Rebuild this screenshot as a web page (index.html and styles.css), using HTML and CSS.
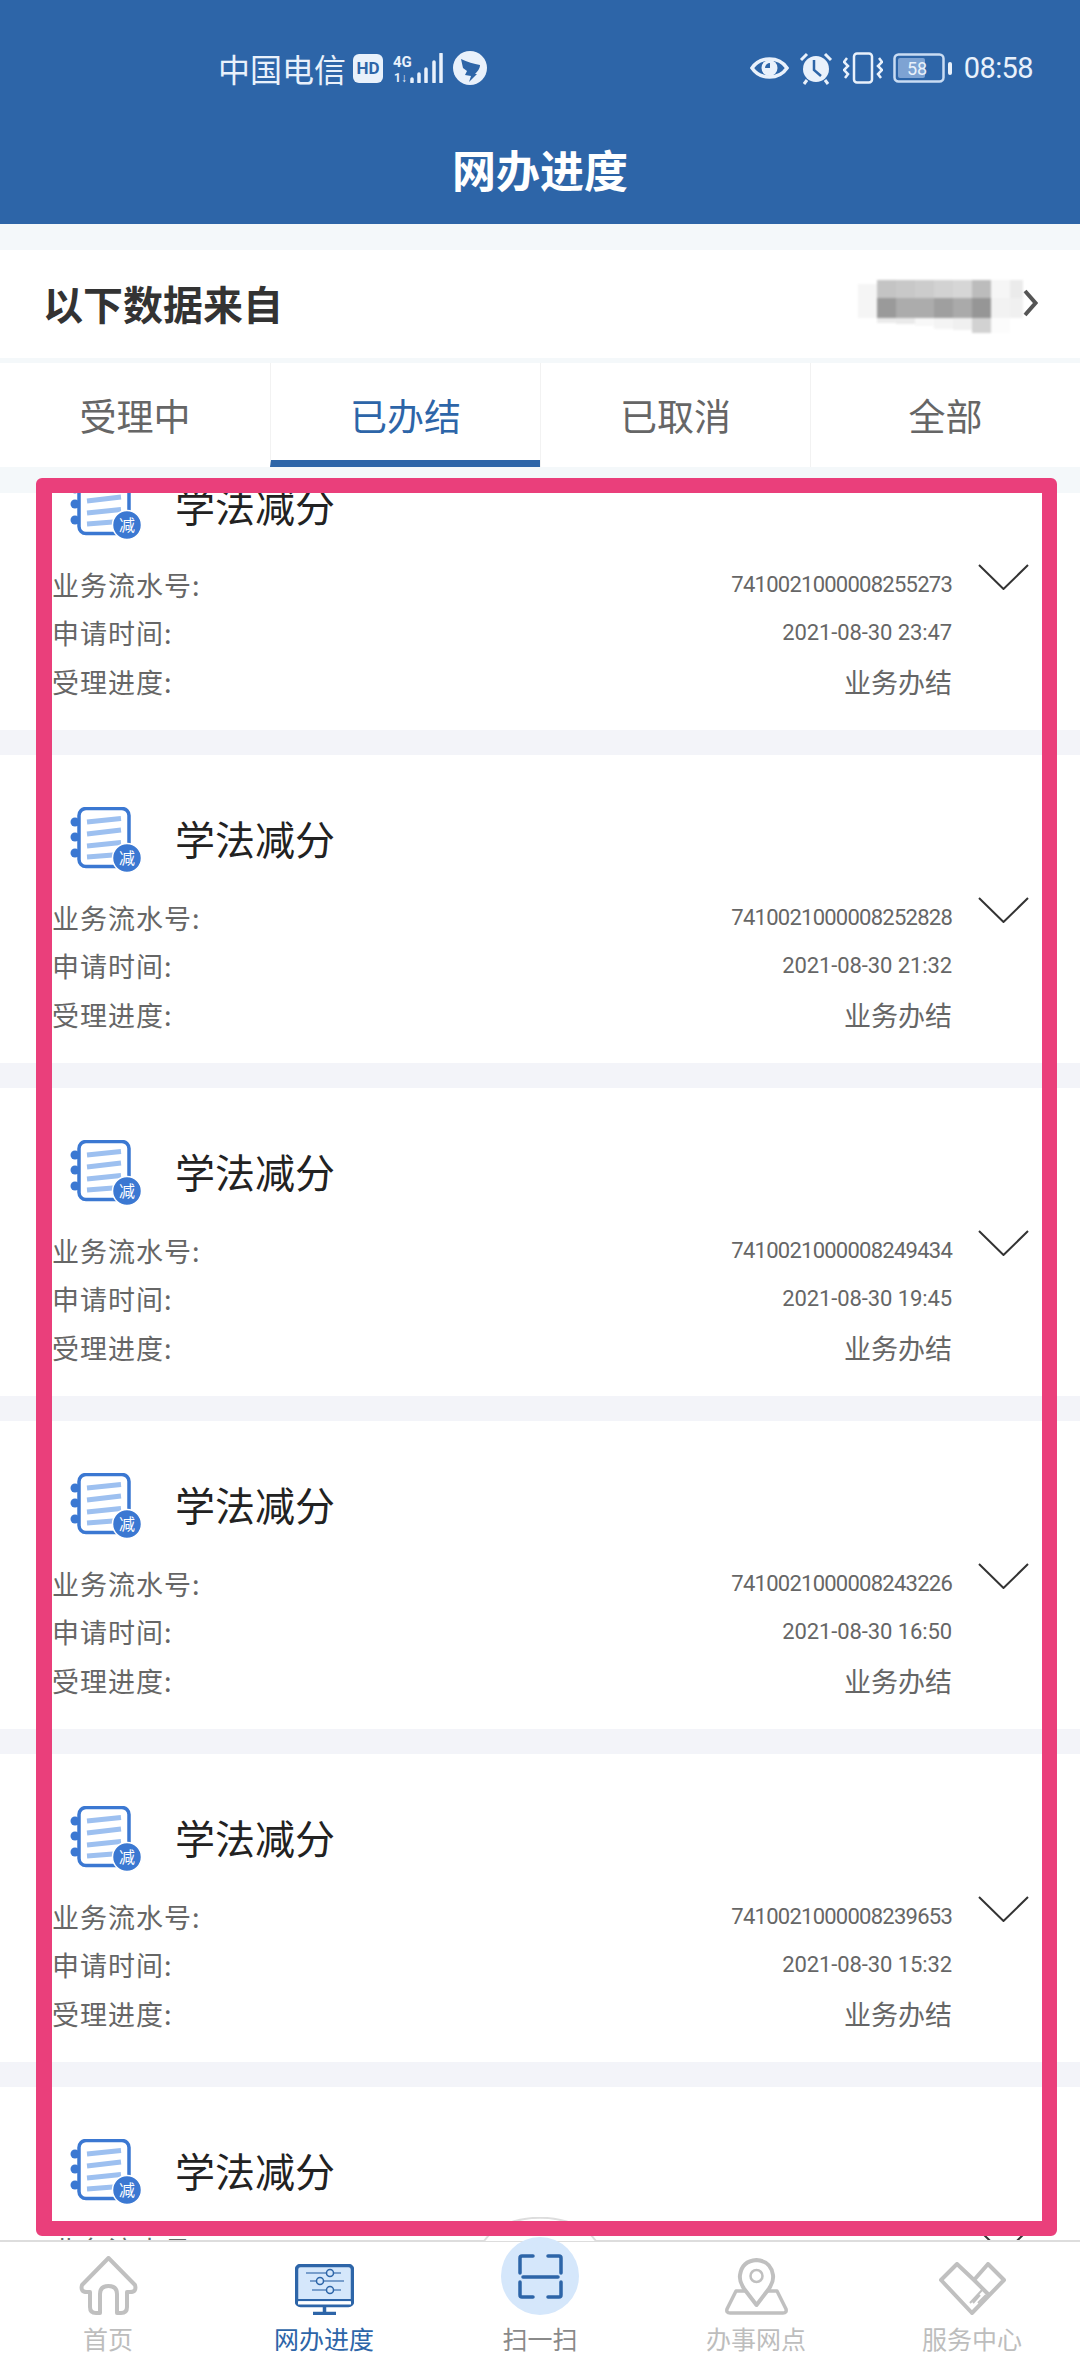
FILE: index.html
```html
<!DOCTYPE html>
<html lang="zh-CN">

<head>
  <meta charset="UTF-8">
  <meta name="viewport" content="width=device-width, initial-scale=1.0">
  <title>网办进度</title>
  <link rel="stylesheet" href="styles.css">
</head>

<body>
  <svg class="defs" width="0" height="0">
    <symbol id="book" viewBox="0 0 73 66">
      <circle cx="6" cy="15" r="4.5" fill="#3b78d2"></circle>
      <circle cx="6" cy="30" r="4.5" fill="#3b78d2"></circle>
      <circle cx="6" cy="46" r="4.5" fill="#3b78d2"></circle>
      <rect x="10" y="1.5" width="50" height="58" rx="7" fill="#fff" stroke="#3b78d2" stroke-width="3.5"></rect>
      <path d="M18 15 L52 11.5 M18 27 L52 23 M18 39 L52 35.5 M18 50 L44 48" stroke="#9dc0f0" stroke-width="5" fill="none"></path>
      <circle cx="58" cy="51" r="14.5" fill="#3b78d2" stroke="#fff" stroke-width="1.5"></circle>
      <text x="58" y="57" text-anchor="middle" font-size="16" fill="#fff" font-family="Noto Sans CJK SC, sans-serif">减</text>
    </symbol>
    <symbol id="chev" viewBox="0 0 51 26">
      <path d="M1 1 L25.500 25 L50 1" fill="none" stroke="#333" stroke-width="2"></path>
    </symbol>
  </svg>

  <div class="page">
    <header class="top">
      <div class="status">
        <div class="status-group">
          <span class="carrier">中国电信</span>
          <span class="hd">HD</span>
          <svg class="signal" width="50" height="30" viewBox="0 0 50 30">
            <text x="0" y="14" font-size="15" font-weight="700" fill="#e9f1fb" font-family="Roboto, sans-serif">4G</text>
            <text x="1" y="29" font-size="12" font-weight="700" fill="#e9f1fb" font-family="Roboto, sans-serif">1↓</text>
            <path d="M19 26 V29 M26 21 V29 M33 16 V29 M41 9 V29 M48 1 V29" stroke="#e9f1fb" stroke-width="3.500" stroke-linecap="round"></path>
          </svg>
          <svg width="34" height="34" viewBox="0 0 34 34">
            <circle cx="17" cy="17" r="17" fill="#e9f1fb"></circle>
            <path d="M8 8 C14 11 21 13 27 14 C27 18 24 21 22 23 L24 23 L16 31 L18 25 L12 24 L14 20 L10 17 Z" fill="#2d65a8"></path>
          </svg>
        </div>
        <div class="status-group status-right">
          <svg width="39" height="28" viewBox="0 0 39 28">
            <path d="M2 14 C10 2 29 2 37 14 C29 26 10 26 2 14 Z" fill="none" stroke="#e9f1fb" stroke-width="3.500"></path>
            <circle cx="19.500" cy="14" r="8" fill="#e9f1fb"></circle>
            <path d="M15 14 A5 5 0 0 1 20 9 L20 14 Z" fill="#2d65a8"></path>
          </svg>
          <svg width="34" height="34" viewBox="0 0 34 34">
            <circle cx="17" cy="18" r="13" fill="#e9f1fb"></circle>
            <path d="M2 9 L8 3 M32 9 L26 3 M8 29 L5 33 M26 29 L29 33" stroke="#e9f1fb" stroke-width="3"></path>
            <path d="M15 9 V19 L22 25" fill="none" stroke="#2d65a8" stroke-width="2.500"></path>
          </svg>
          <svg width="40" height="32" viewBox="0 0 40 32">
            <rect x="11" y="1.500" width="18" height="29" rx="3" fill="none" stroke="#e9f1fb" stroke-width="2.500"></rect>
            <path d="M4 6 L1 10 L5 14 L1 18 L5 22 L2 26 M36 6 L39 10 L35 14 L39 18 L35 22 L38 26" fill="none" stroke="#e9f1fb" stroke-width="2.500"></path>
          </svg>
          <svg width="60" height="30" viewBox="0 0 60 30">
            <rect x="1.500" y="1.500" width="49" height="27" rx="4" fill="none" stroke="#c9dcf3" stroke-width="2.500"></rect>
            <rect x="5" y="5" width="27" height="20" rx="2" fill="#7ea3d3"></rect>
            <text x="24" y="22" text-anchor="middle" font-size="18" fill="#e9f1fb" font-family="Roboto, sans-serif">58</text>
            <rect x="55" y="9" width="4" height="13" rx="2" fill="#e9f1fb"></rect>
          </svg>
          <span class="time">08:58</span>
        </div>
      </div>
      <h1 class="title">网办进度</h1>
    </header>

    <div class="source">
      <span class="source-label">以下数据来自</span>
      <div class="source-right">
        <svg class="mosaic" width="165" height="53" viewBox="0 0 165 53">
          <rect x="0" y="4" width="19" height="34" fill="#f5f5f5"></rect>
          <rect x="19" y="0" width="19" height="18" fill="#c4c4c4"></rect>
          <rect x="38" y="0" width="19" height="18" fill="#c8c8c8"></rect>
          <rect x="57" y="0" width="19" height="18" fill="#cccccc"></rect>
          <rect x="76" y="0" width="19" height="18" fill="#d2d2d2"></rect>
          <rect x="95" y="0" width="19" height="18" fill="#d6d6d6"></rect>
          <rect x="114" y="0" width="19" height="18" fill="#bcbcbc"></rect>
          <rect x="133" y="0" width="19" height="18" fill="#f6f6f6"></rect>
          <rect x="152" y="0" width="13" height="18" fill="#ebebeb"></rect>
          <rect x="19" y="18" width="19" height="20" fill="#9a9a9a"></rect>
          <rect x="38" y="18" width="19" height="20" fill="#acacac"></rect>
          <rect x="57" y="18" width="19" height="20" fill="#acacac"></rect>
          <rect x="76" y="18" width="19" height="20" fill="#9f9f9f"></rect>
          <rect x="95" y="18" width="19" height="20" fill="#aaaaaa"></rect>
          <rect x="114" y="18" width="19" height="20" fill="#969696"></rect>
          <rect x="133" y="18" width="19" height="20" fill="#f2f2f2"></rect>
          <rect x="152" y="18" width="13" height="20" fill="#f0f0f0"></rect>
          <rect x="19" y="38" width="19" height="5" fill="#ebebeb"></rect>
          <rect x="38" y="38" width="19" height="6" fill="#eaeaea"></rect>
          <rect x="57" y="38" width="19" height="8" fill="#f8f8f8"></rect>
          <rect x="76" y="38" width="19" height="11" fill="#f4f4f4"></rect>
          <rect x="95" y="38" width="19" height="12" fill="#f0f0f0"></rect>
          <rect x="114" y="38" width="19" height="15" fill="#d2d2d2"></rect>
          <rect x="133" y="38" width="19" height="15" fill="#fcfcfc"></rect>
        </svg>
        <svg class="source-arrow" width="15" height="28" viewBox="0 0 15 28">
          <path d="M2 2 L12.500 14 L2 26" fill="none" stroke="#555" stroke-width="4"></path>
        </svg>
      </div>
    </div>

    <div class="tabs">
      <div class="tab">受理中</div>
      <div class="tab tab-active">已办结</div>
      <div class="tab">已取消</div>
      <div class="tab">全部</div>
    </div>

    <div class="list">
      <div class="card card-first">
        <div class="card-head">
          <svg class="book" width="73" height="66"><use href="#book"></use></svg>
          <span class="card-title">学法减分</span>
        </div>
        <div class="card-body">
          <div class="rows">
            <div class="row"><span class="label">业务流水号:</span><span class="num">7410021000008255273</span></div>
            <div class="row"><span class="label">申请时间:</span><span class="num date">2021-08-30 23:47</span></div>
            <div class="row"><span class="label">受理进度:</span><span>业务办结</span></div>
          </div>
          <svg class="chev" width="51" height="26"><use href="#chev"></use></svg>
        </div>
      </div>

      <div class="card">
        <div class="card-head">
          <svg class="book" width="73" height="66"><use href="#book"></use></svg>
          <span class="card-title">学法减分</span>
        </div>
        <div class="card-body">
          <div class="rows">
            <div class="row"><span class="label">业务流水号:</span><span class="num">7410021000008252828</span></div>
            <div class="row"><span class="label">申请时间:</span><span class="num date">2021-08-30 21:32</span></div>
            <div class="row"><span class="label">受理进度:</span><span>业务办结</span></div>
          </div>
          <svg class="chev" width="51" height="26"><use href="#chev"></use></svg>
        </div>
      </div>

      <div class="card">
        <div class="card-head">
          <svg class="book" width="73" height="66"><use href="#book"></use></svg>
          <span class="card-title">学法减分</span>
        </div>
        <div class="card-body">
          <div class="rows">
            <div class="row"><span class="label">业务流水号:</span><span class="num">7410021000008249434</span></div>
            <div class="row"><span class="label">申请时间:</span><span class="num date">2021-08-30 19:45</span></div>
            <div class="row"><span class="label">受理进度:</span><span>业务办结</span></div>
          </div>
          <svg class="chev" width="51" height="26"><use href="#chev"></use></svg>
        </div>
      </div>

      <div class="card">
        <div class="card-head">
          <svg class="book" width="73" height="66"><use href="#book"></use></svg>
          <span class="card-title">学法减分</span>
        </div>
        <div class="card-body">
          <div class="rows">
            <div class="row"><span class="label">业务流水号:</span><span class="num">7410021000008243226</span></div>
            <div class="row"><span class="label">申请时间:</span><span class="num date">2021-08-30 16:50</span></div>
            <div class="row"><span class="label">受理进度:</span><span>业务办结</span></div>
          </div>
          <svg class="chev" width="51" height="26"><use href="#chev"></use></svg>
        </div>
      </div>

      <div class="card">
        <div class="card-head">
          <svg class="book" width="73" height="66"><use href="#book"></use></svg>
          <span class="card-title">学法减分</span>
        </div>
        <div class="card-body">
          <div class="rows">
            <div class="row"><span class="label">业务流水号:</span><span class="num">7410021000008239653</span></div>
            <div class="row"><span class="label">申请时间:</span><span class="num date">2021-08-30 15:32</span></div>
            <div class="row"><span class="label">受理进度:</span><span>业务办结</span></div>
          </div>
          <svg class="chev" width="51" height="26"><use href="#chev"></use></svg>
        </div>
      </div>

      <div class="card">
        <div class="card-head">
          <svg class="book" width="73" height="66"><use href="#book"></use></svg>
          <span class="card-title">学法减分</span>
        </div>
        <div class="card-body">
          <div class="rows">
            <div class="row"><span class="label">业务流水号:</span></div>
          </div>
          <svg class="chev" width="51" height="26"><use href="#chev"></use></svg>
        </div>
      </div>
    </div>

    <nav class="nav">
      <svg class="nav-bump" width="114" height="25" viewBox="0 0 114 25">
        <path d="M1 24 C22 -7 92 -7 113 24" fill="#fff" stroke="#ddd" stroke-width="2"></path>
      </svg>
      <div class="nav-item">
        <div class="nav-icon">
          <svg width="59" height="59" viewBox="0 0 59 59">
            <path d="M29.500 2 L56 29 Q58 36 51 36 L48 36 L48 51 Q48 57 42 57 L38 57 L38 38 Q38 30 29.500 30 Q21 30 21 38 L21 57 L17 57 Q11 57 11 51 L11 36 L8 36 Q1 36 3 29 Z" fill="none" stroke="#c0c0c0" stroke-width="4" stroke-linejoin="round"></path>
          </svg>
        </div>
        <span class="nav-text">首页</span>
      </div>
      <div class="nav-item nav-active">
        <div class="nav-icon">
          <svg width="59" height="51" viewBox="0 0 59 51">
            <rect x="1.500" y="1.500" width="56" height="40" rx="4" fill="#d5e7fb" stroke="#2d65a8" stroke-width="3.500"></rect>
            <path d="M3 36 H56" stroke="#2d65a8" stroke-width="2"></path>
            <path d="M3 39 H56" stroke="#fff" stroke-width="3"></path>
            <path d="M29.500 42 V49 M18 49.500 H41" stroke="#2d65a8" stroke-width="3.500"></path>
            <path d="M11 9 H46 M15 17 H49 M17 26 H46" stroke="#5a86bd" stroke-width="1.500"></path>
            <circle cx="35" cy="9" r="3.500" fill="#d5e7fb" stroke="#2d65a8" stroke-width="1.500"></circle>
            <circle cx="25" cy="17" r="3.500" fill="#d5e7fb" stroke="#2d65a8" stroke-width="1.500"></circle>
            <circle cx="35" cy="26" r="3.500" fill="#d5e7fb" stroke="#2d65a8" stroke-width="1.500"></circle>
          </svg>
        </div>
        <span class="nav-text">网办进度</span>
      </div>
      <div class="nav-item nav-scan">
        <div class="nav-icon">
          <div class="scan-circle">
            <svg width="45" height="45" viewBox="0 0 45 45">
              <path d="M15 2 H4 Q2 2 2 4 V19 M30 2 H41 Q43 2 43 4 V19 M2 28 V41 Q2 43 4 43 H15 M43 28 V41 Q43 43 41 43 H30 M5 23 H40" fill="none" stroke="#2d65a8" stroke-width="3.500" stroke-linecap="round"></path>
            </svg>
          </div>
        </div>
        <span class="nav-text">扫一扫</span>
      </div>
      <div class="nav-item">
        <div class="nav-icon">
          <svg width="65" height="57" viewBox="0 0 65 57">
            <path d="M12 33 H53 L62 51 Q63 55 59 55 H6 Q2 55 3 51 Z" fill="none" stroke="#c0c0c0" stroke-width="3.500" stroke-linejoin="round"></path>
            <path d="M32.500 47 L21 32 Q15 24 16 17 Q18 3 32.500 2 Q47 3 49 17 Q50 24 44 32 Z" fill="#fff" stroke="#c0c0c0" stroke-width="4" stroke-linejoin="round"></path>
            <circle cx="32.500" cy="18" r="6" fill="none" stroke="#c0c0c0" stroke-width="2.500"></circle>
          </svg>
        </div>
        <span class="nav-text">办事网点</span>
      </div>
      <div class="nav-item">
        <div class="nav-icon">
          <svg width="67" height="53" viewBox="0 0 67 53">
            <path d="M2 18 L18 2 L35 18 L49 2 L65 18 L33 51 Z M35 18 L50 33" fill="none" stroke="#c0c0c0" stroke-width="4" stroke-linejoin="round"></path>
            <path d="M44 27 L31 41 M41 33 L34 41 M47 33 L39 41" stroke="#c0c0c0" stroke-width="2"></path>
          </svg>
        </div>
        <span class="nav-text">服务中心</span>
      </div>
    </nav>

    <div class="frame"></div>
  </div>
</body>

</html>
```

FILE: styles.css
```css
* {
  box-sizing: border-box;
}

body {
  margin: 0;
  font-family: "Noto Sans CJK SC", "Noto Sans", sans-serif;
  background: #f4f8fa;
}

.defs {
  position: absolute;
}

.page {
  width: 1080px;
  height: 2376px;
  display: flex;
  flex-direction: column;
  position: relative;
  overflow: hidden;
}

.top {
  height: 224px;
  flex-shrink: 0;
  background: #2d65a8;
  color: #fff;
}

.status {
  height: 136px;
  display: flex;
  justify-content: space-between;
  align-items: center;
  padding: 0 47px 0 218px;
  color: #e9f1fb;
}

.status-group {
  display: flex;
  align-items: center;
  gap: 10px;
}

.carrier {
  font-size: 32px;
  line-height: 40px;
}

.hd {
  width: 30px;
  height: 29px;
  border-radius: 6px;
  background: #e9f1fb;
  color: #2d65a8;
  font: 700 17px/29px Roboto, sans-serif;
  text-align: center;
  margin-left: -3px;
}

.time {
  font: 400 29px/36px Roboto, sans-serif;
  letter-spacing: -0.6px;
  margin-left: 1px;
}

.title {
  margin: 0;
  font-size: 44px;
  line-height: 66px;
  font-weight: 700;
  text-align: center;
}

.source {
  height: 108px;
  margin-top: 26px;
  flex-shrink: 0;
  display: flex;
  justify-content: space-between;
  align-items: center;
  padding: 0 42px 0 43px;
  background: #fff;
}

.source-label {
  font-size: 40px;
  line-height: 56px;
  margin-top: -2px;
  font-weight: 700;
  color: #333;
}

.source-right {
  display: flex;
  align-items: center;
}

.mosaic {
  filter: blur(1px);
  margin-top: 5px;
}

.source-arrow {
  margin-top: -3px;
}

.tabs {
  height: 104px;
  margin-top: 5px;
  flex-shrink: 0;
  display: grid;
  grid-template-columns: repeat(4, 1fr);
  grid-template-rows: 104px;
  background: #fff;
}

.tab {
  font-size: 37px;
  line-height: 104px;
  text-align: center;
  color: #666;
  border-left: 1px solid #f2f2f2;
}

.tab:first-child {
  border-left: none;
}

.tab-active {
  color: #2d65a8;
  border-bottom: 7px solid #2d65a8;
}

.list {
  flex: 1;
  min-height: 0;
  margin-top: 26px;
  overflow: hidden;
  display: flex;
  flex-direction: column;
  gap: 25px;
  background: #f3f4f9;
}

.card {
  flex-shrink: 0;
  height: 308px;
  padding: 52px 51px 0 52px;
  background: #fff;
}

.card-first {
  margin-top: -71px;
}

.card-head {
  display: flex;
  align-items: center;
  gap: 33px;
  height: 65px;
  padding-left: 17px;
}

.book {
  flex-shrink: 0;
}

.card-title {
  font-size: 40px;
  color: #222;
  line-height: 56px;
  margin-top: -3px;
}

.card-body {
  display: flex;
  align-items: flex-start;
  gap: 26px;
  margin-top: 24px;
}

.rows {
  flex: 1;
  margin-top: -3px;
}

.row {
  display: flex;
  justify-content: space-between;
  align-items: center;
  height: 48.500px;
  font-size: 27px;
  color: #666;
}

.label {
  letter-spacing: 1px;
}

.num {
  font-family: Roboto, sans-serif;
  font-size: 22px;
  letter-spacing: -0.75px;
}

.date {
  letter-spacing: -0.1px;
}

.chev {
  flex-shrink: 0;
  margin-top: 1px;
}

.nav {
  height: 136px;
  flex-shrink: 0;
  display: grid;
  grid-template-columns: repeat(5, 1fr);
  position: relative;
  background: #fff;
  border-top: 2px solid #ddd;
}

.nav-bump {
  position: absolute;
  left: 483px;
  top: -25px;
}

.nav-item {
  display: flex;
  flex-direction: column;
  align-items: center;
  position: relative;
}

.nav-icon {
  height: 73px;
  display: flex;
  align-items: flex-end;
  justify-content: center;
}

.nav-text {
  font-size: 25px;
  line-height: 30px;
  margin-top: 8px;
  color: #bdbdbd;
}

.nav-active .nav-text {
  color: #2d65a8;
}

.nav-scan .nav-text {
  color: #8a8a8a;
}

.scan-circle {
  width: 78px;
  height: 78px;
  flex-shrink: 0;
  border-radius: 50%;
  background: #d5e7fb;
  display: flex;
  align-items: center;
  justify-content: center;
}

/* annotation box drawn over the list */
.frame {
  position: absolute;
  left: 36px;
  top: 478px;
  width: 1021px;
  height: 1758px;
  border: 15px solid #ea3f7b;
  border-left-width: 16px;
  border-radius: 6px;
  pointer-events: none;
}
```
